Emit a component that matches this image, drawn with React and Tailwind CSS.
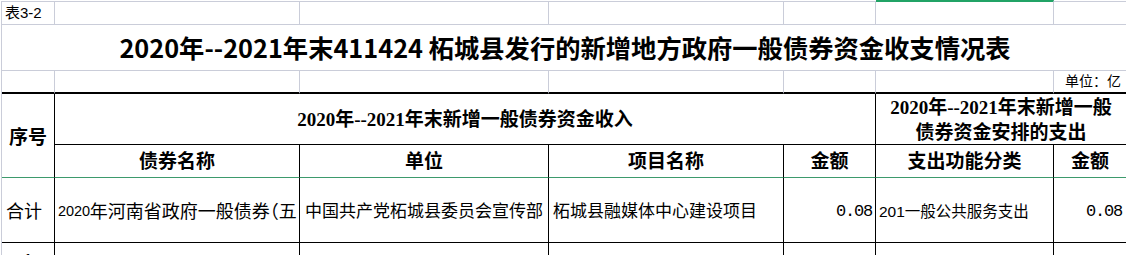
import React from 'react';

const grayLine = 'border-[#cacdd9]';
const head = 'font-bold text-[19px] text-black';
const headFont = { fontFamily: '"Liberation Serif", "Noto Sans CJK SC", serif' };
const dataFont = { fontFamily: '"Liberation Sans", "Noto Sans CJK SC", sans-serif' };
const monoFont = { fontFamily: '"Liberation Mono", "Noto Sans CJK SC", monospace' };

function Cell({ className = '', style, children }) {
  return (
    <div className={`flex items-center overflow-hidden whitespace-nowrap ${className}`} style={style}>
      {children}
    </div>
  );
}

export default function App() {
  return (
    <div className="w-[1126px] h-[255px] overflow-hidden bg-white pt-px">
      <div
        className={`ml-px grid grid-cols-[53px_245px_249px_235px_92px_178px_1fr] grid-rows-[24px_46px_23px_51px_33px_65px_40px] border-l ${grayLine}`}
      >
        {/* row 1 */}
        <Cell className={`border-t border-r border-b ${grayLine} pl-[3px] text-[15px]`} style={dataFont}>
          表3-2
        </Cell>
        <Cell className={`border-t border-r border-b ${grayLine}`} />
        <Cell className={`border-t border-r border-b ${grayLine}`} />
        <Cell className={`border-t border-r border-b ${grayLine}`} />
        <Cell className={`border-t border-r border-b ${grayLine}`} />
        <Cell className={`-mt-px border-t-2 border-t-[#21a366] border-r border-b ${grayLine}`} />
        <Cell className={`border-t border-b ${grayLine}`} />

        {/* row 2: title */}
        <Cell
          className={`col-span-7 justify-center border-b ${grayLine} pl-[2px] text-[25.3px] font-bold text-black`}
          style={{ fontFamily: '"Noto Sans CJK SC", "Liberation Sans", sans-serif' }}
        >
          2020年--2021年末411424 柘城县发行的新增地方政府一般债券资金收支情况表
        </Cell>

        {/* row 3 */}
        <Cell className={`border-r ${grayLine} border-b-2 border-b-black`} />
        <Cell className={`border-r ${grayLine} border-b-2 border-b-black`} />
        <Cell className={`border-r ${grayLine} border-b-2 border-b-black`} />
        <Cell className={`border-r ${grayLine} border-b-2 border-b-black`} />
        <Cell className={`border-r ${grayLine} border-b-2 border-b-black`} />
        <Cell className={`border-r ${grayLine} border-b-2 border-b-black`} />
        <Cell className="border-b-2 border-b-black pl-[11px] text-[14px]" style={dataFont}>
          单位：亿
        </Cell>

        {/* rows 4-5: headers */}
        <Cell
          className={`row-span-2 justify-center border-r border-r-black border-b border-b-[#3d9a6c] pt-[6px] ${head}`}
          style={headFont}
        >
          序号
        </Cell>
        <Cell className={`col-span-4 justify-center border-r border-b border-black pt-[2px] ${head}`} style={headFont}>
          2020年--2021年末新增一般债券资金收入
        </Cell>
        <Cell
          className={`col-span-2 flex-col justify-center border-b border-black pt-[2px] leading-[25px] ${head}`}
          style={headFont}
        >
          <span>2020年--2021年末新增一般</span>
          <span>债券资金安排的支出</span>
        </Cell>

        {['债券名称', '单位', '项目名称', '金额', '支出功能分类'].map((t) => (
          <Cell
            key={t}
            className={`justify-center border-r border-r-black border-b border-b-[#3d9a6c] pt-[3px] ${head}`}
            style={headFont}
          >
            {t}
          </Cell>
        ))}
        <Cell className={`justify-center border-b border-b-[#3d9a6c] pt-[3px] ${head}`} style={headFont}>
          金额
        </Cell>

        {/* row 6: data */}
        <Cell className="border-r border-r-black border-b border-b-black pl-[4px] pt-[4px] text-[18px]" style={dataFont}>
          合计
        </Cell>
        <Cell className="border-r border-r-black border-b border-b-black pl-[3px] pt-[4px] text-[18px]" style={dataFont}>
          <span className="text-[14.5px] tracking-[-0.1px]">2020</span>
          <span>年河南省政府一般债</span>
          <span className="tracking-[-9px]">券</span>
          <span>（五</span>
        </Cell>
        <Cell
          className="justify-center border-r border-r-black border-b border-b-black pt-[4px] text-[17px]"
          style={dataFont}
        >
          中国共产党柘城县委员会宣传部
        </Cell>
        <Cell className="border-r border-r-black border-b border-b-black pl-[4px] pt-[4px] text-[17px]" style={dataFont}>
          柘城县融媒体中心建设项目
        </Cell>
        <Cell
          className="justify-end border-r border-r-black border-b border-b-black pr-[3px] pt-[4px] text-[17px] tracking-[-1.2px]"
          style={monoFont}
        >
          0.08
        </Cell>
        <Cell className="border-r border-r-black border-b border-b-black pl-[3px] pt-[4px] text-[15.5px]" style={dataFont}>
          201一般公共服务支出
        </Cell>
        <Cell
          className="justify-end border-b border-b-black pr-[4px] pt-[4px] text-[17px] tracking-[-1.2px]"
          style={monoFont}
        >
          0.08
        </Cell>

        {/* row 7 */}
        <Cell className="items-start justify-center border-r border-r-black pt-[5px] text-[18px]" style={dataFont}>
          1
        </Cell>
        <Cell className="border-r border-r-black" />
        <Cell className="border-r border-r-black" />
        <Cell className="border-r border-r-black" />
        <Cell className="border-r border-r-black" />
        <Cell className="border-r border-r-black" />
        <Cell />
      </div>
    </div>
  );
}
